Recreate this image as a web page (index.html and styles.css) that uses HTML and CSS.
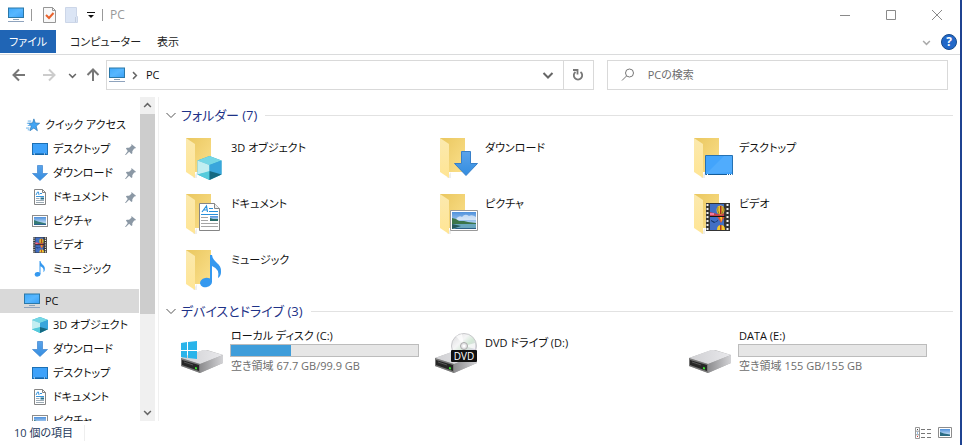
FILE: index.html
```html
<!DOCTYPE html>
<html lang="ja">
<head>
<meta charset="utf-8">
<title>PC</title>
<link rel="stylesheet" href="styles.css">
</head>
<body>
<svg class="defs" width="0" height="0" aria-hidden="true">
  <defs>
    <linearGradient id="g-screen" x1="0" y1="0" x2="1" y2="1"><stop offset="0" stop-color="#3fa9fb"/><stop offset=".5" stop-color="#57b7ff"/><stop offset="1" stop-color="#3a9ff5"/></linearGradient>
    <linearGradient id="g-back" x1="0" y1="0" x2="1" y2="1"><stop offset="0" stop-color="#eac75f"/><stop offset="1" stop-color="#fbe08c"/></linearGradient>
    <linearGradient id="g-flap" x1="0" y1="0" x2="0" y2="1"><stop offset="0" stop-color="#fbe9ae"/><stop offset="1" stop-color="#ffe594"/></linearGradient>
    <linearGradient id="g-arrow" x1="0" y1="0" x2="0" y2="1"><stop offset="0" stop-color="#5aa3ea"/><stop offset="1" stop-color="#338de0"/></linearGradient>
    <linearGradient id="g-side" x1="0" y1="0" x2="1" y2="0"><stop offset="0" stop-color="#8c8c8e"/><stop offset="1" stop-color="#d3d3d6"/></linearGradient>
    <linearGradient id="g-top" x1="0" y1="0" x2="1" y2="0"><stop offset="0" stop-color="#cfcfd2"/><stop offset="1" stop-color="#e9e9ec"/></linearGradient>
    <linearGradient id="g-sky" x1="0" y1="0" x2="0" y2="1"><stop offset="0" stop-color="#4f91dc"/><stop offset="1" stop-color="#e4f3fb"/></linearGradient>
    <linearGradient id="g-disc" x1="0" y1="0" x2="1" y2="1"><stop offset="0" stop-color="#d8d8da"/><stop offset=".35" stop-color="#f5f5f6"/><stop offset=".55" stop-color="#d3e8d6"/><stop offset=".8" stop-color="#dcd5e6"/><stop offset="1" stop-color="#c5c5c9"/></linearGradient>

    <symbol id="i-pc" viewBox="0 0 16 16">
      <rect x=".5" y="1" width="15" height="9.5" fill="url(#g-screen)" stroke="#2b78a8"/>
      <path d="M5 12.5h6" stroke="#8ba3b8"/><path d="M0 14.5h16" stroke="#8fa3bd"/>
    </symbol>
    <symbol id="i-desktop" viewBox="0 0 16 16">
      <rect x=".5" y="2.5" width="15" height="11" fill="#3ea2fa" stroke="#1c70b4"/><path d="M2 13h12" stroke="#0d5a9b"/><path d="M2 13h1m9 0h1" stroke="#fff"/>
    </symbol>
    <symbol id="i-down" viewBox="0 0 16 16"><path d="M5.5.5h5v8h5L8 15.5.5 8.500h5z" fill="url(#g-arrow)" stroke="#3e84cf" stroke-width=".7"/></symbol>
    <symbol id="i-doc" viewBox="0 0 16 16">
      <path d="M2.500.500h8l3 3v12h-11z" fill="#fff" stroke="#858585"/><path d="M10.500.500v3h3" fill="none" stroke="#858585"/>
      <path d="M4 6l1.500-3h1L7 6M8 4.500h2M4 7.500h8" fill="none" stroke="#3694dc"/><path d="M4 9.500h3.500M4 11.500h8M4 13.500h8" stroke="#9baab5"/><path d="M8.500 9.500H12" stroke="#26718e" stroke-width="2"/>
    </symbol>
    <symbol id="i-picture" viewBox="0 0 16 16">
      <rect x=".5" y="2.500" width="15" height="11" fill="#fff" stroke="#8c8c8c"/><path fill="url(#g-sky)" d="M2 4h12v8H2z"/><path d="M2 7l4 1.500 8 2V12H2z" fill="#367b76"/><path d="M2 11h12v1H2z" fill="#2b6390"/>
    </symbol>
    <symbol id="i-film" viewBox="0 0 24 28">
      <path fill="#343434" d="M0 0h24v28H0z"/><path fill="#426fc4" d="M4 1h14v12H4zM4 14h14v13H4z"/>
      <path d="M4 9l4 1 3 1 7-1v3H4z" fill="#c4434c"/><path d="M4 10h4v2H4z" fill="#ee79a1"/>
      <ellipse cx="14.500" cy="7" rx="4" ry="4.500" fill="#f5c22a"/><path d="M14 3h1.500v8H14z" fill="#a53123"/><path d="M12 4q-1 3 1 7M17 4q1 3-1 7" stroke="#5b672f" stroke-width=".7" fill="none"/>
      <path d="M11.500 14h7l-3.500 6z" fill="#e2562d"/><path d="M14 14h2l-.5 5z" fill="#fbd62d"/><path d="M5 17l4 2 3-2v1l-4 2-3-2z" fill="#173569"/>
      <path d="M11 27q0-5 4-5t4 5z" fill="#f6ca2f"/><path d="M14 22h1.500v5H14z" fill="#b53e23"/><path d="M4 13.500h15" stroke="#151515"/>
      <path d="M1.500 1v27M21.500 1v27" stroke="#f4f4f4" stroke-width="2" stroke-dasharray="2 2"/>
    </symbol>
    <symbol id="i-note" viewBox="0 0 22 33">
      <ellipse cx="6" cy="27.500" rx="6" ry="4.700" fill="#3498ef" transform="rotate(-12 6 27.500)"/><path d="M10 0h2c1 8 10 8 9 17q0 4-3 6 2-9-6-12v16h-2z" fill="#3498ef"/>
    </symbol>
    <symbol id="i-cube" viewBox="0 0 24 24">
      <path d="M12 0l12 4.500v14L12 24 0 18.500v-14z" fill="#35adcc"/><path d="M12 0l12 4.500L12 9 0 4.500z" fill="#75d7e5"/><path d="M0 4.500L12 9v7L0 18.500z" fill="#c2eef1"/><path d="M12 9l12-4.500v14L12 16z" fill="#39a6dc"/><path d="M0 18.500L12 15v9z" fill="#55cbdc"/><path d="M12 15l12 3.500L12 24z" fill="#156982"/>
    </symbol>
    <symbol id="i-star" viewBox="0 0 16 16">
      <path d="M9 1l1.600 4.700 5 .3-4 3.200 1.400 5.300L9 11.500l-4.500 3L6 9.200 3 6l4.500-.3z" fill="#42a5f4" stroke="#2777b8" stroke-width=".8"/><path d="M2 3.500h4M1 6h3M2 8.500h3M0 11.500h4M2 13.500h2" stroke="#53a7e8"/>
    </symbol>
    <symbol id="i-pin" viewBox="0 0 12 12"><path d="M7 0l5 4-1 1-1 0-2 3 0 2-1 1-2.500-2.500L1 12H0l3-4.500L1 5l1-1h2.500L7 2z" fill="#8b98a5"/></symbol>
    <symbol id="i-chev" viewBox="0 0 12 12"><path d="M1.500 4L6 8.500 10.500 4" fill="none" stroke="currentColor" stroke-width="var(--sw,1)"/></symbol>
    <symbol id="i-arrow" viewBox="0 0 14 14"><path d="M1.500 7H13M7 1.500L1.500 7 7 12.500" fill="none" stroke="currentColor" stroke-width="2"/></symbol>
    <symbol id="folder" viewBox="0 0 48 48">
      <path d="M6 2h25v34H6z" fill="url(#g-back)"/><path d="M13 42l4-6v6z" fill="#ddd" opacity=".5"/><path d="M6 2l9 6v34l-9-6z" fill="url(#g-flap)"/>
    </symbol>
    <symbol id="drive" viewBox="0 0 44 44">
      <path d="M1 26l23-8q1 0 3 0l16 5v8L20 41 1 34z" fill="#aaa"/><path d="M1 26l22-8h3l17 5-23 9z" fill="url(#g-top)"/><path d="M20 32l23-9v8L20 41z" fill="url(#g-side)"/><path d="M1 26l19 6v9L1 34z" fill="#777"/><path d="M2 28l17 5v6L2 33z" fill="#262626"/><path d="M4 30l9 3" stroke="#555"/><path d="M15 35l2 .5v2l-2-.5z" fill="#38e02c"/>
    </symbol>
  </defs>
</svg>

<div class="window">
  <header class="titlebar">
    <svg class="i16"><use href="#i-pc"/></svg>
    <span class="sep"></span>
    <button class="quick" aria-label="プロパティ"><svg width="14" height="16" viewBox="0 0 14 16"><path d="M.5.500h9l3 3v12H.5z" fill="#f8f8f8" stroke="#969696"/><path d="M9.500.500v3h3" fill="none" stroke="#969696"/><path d="M3 8l3 3 4.500-5" fill="none" stroke="#e8622d" stroke-width="2"/></svg></button>
    <button class="quick" aria-label="新しいフォルダー"><svg width="14" height="16" viewBox="0 0 14 16"><path d="M.5.500h11v9h1v6H.5z" fill="#dbe5f5" stroke="#ccd6e8"/><path d="M10.500 10v5" stroke="#c4cedf"/></svg></button>
    <button class="quick" aria-label="カスタマイズ"><svg width="8" height="8" viewBox="0 0 8 8"><path d="M0 1.500h8" stroke="#111"/><path d="M1 4h6L4 7z" fill="#111"/></svg></button>
    <span class="sep"></span>
    <h1>PC</h1>
    <div class="controls">
      <button aria-label="最小化"><svg width="12" height="12"><path d="M1 6.500h10" stroke="#8a8a8a"/></svg></button>
      <button aria-label="最大化"><svg width="12" height="12"><path d="M1.500 1.500h9v9h-9z" fill="none" stroke="#8a8a8a"/></svg></button>
      <button aria-label="閉じる"><svg width="12" height="12"><path d="M1 1l10 10M11 1L1 11" stroke="#8a8a8a"/></svg></button>
    </div>
  </header>

  <nav class="ribbon">
    <button class="tab file">ファイル</button>
    <button class="tab">コンピューター</button>
    <button class="tab">表示</button>
    <div class="ribbon-end">
      <button aria-label="リボンの展開"><svg class="i9 soft"><use href="#i-chev"/></svg></button>
      <button class="help" aria-label="ヘルプ">?</button>
    </div>
  </nav>

  <div class="toolbar">
    <div class="history">
      <button aria-label="戻る"><svg class="i14"><use href="#i-arrow"/></svg></button>
      <button class="off" aria-label="進む" disabled><svg class="i14 flip"><use href="#i-arrow"/></svg></button>
      <button class="recent" aria-label="最近表示した場所"><svg class="i9 bold"><use href="#i-chev"/></svg></button>
      <button class="up" aria-label="上へ"><svg class="i14 rise"><use href="#i-arrow"/></svg></button>
    </div>
    <div class="address">
      <svg class="i18"><use href="#i-pc"/></svg>
      <svg class="i9 bold left"><use href="#i-chev"/></svg>
      <a href="#pc">PC</a>
      <button class="drop" aria-label="以前の場所"><svg class="i12 bold"><use href="#i-chev"/></svg></button>
      <button class="reload" aria-label="最新の情報に更新"><svg width="12" height="14" viewBox="0 0 12 14"><path d="M8.500 4A4.200 4.200 0 1 1 3.500 4" fill="none" stroke="#777" stroke-width="1.800"/><path d="M1 2h4.500v4.500" fill="none" stroke="#777" stroke-width="1.800"/></svg></button>
    </div>
    <label class="search">
      <svg width="14" height="14" viewBox="0 0 14 14"><circle cx="8.500" cy="5" r="4" fill="none" stroke="#777"/><path d="M5.500 8L1 12.500" stroke="#777"/></svg>
      <input type="search" placeholder="PCの検索" aria-label="PCの検索">
    </label>
  </div>

  <div class="body">
    <aside class="side">
      <ul class="tree">
        <li class="root"><svg class="i16 star"><use href="#i-star"/></svg><a href="#q">クイック アクセス</a></li>
        <li><svg class="i16"><use href="#i-desktop"/></svg><a href="#q1">デスクトップ</a><svg class="pin"><use href="#i-pin"/></svg></li>
        <li><svg class="i16"><use href="#i-down"/></svg><a href="#q2">ダウンロード</a><svg class="pin"><use href="#i-pin"/></svg></li>
        <li><svg class="i16"><use href="#i-doc"/></svg><a href="#q3">ドキュメント</a><svg class="pin"><use href="#i-pin"/></svg></li>
        <li><svg class="i16"><use href="#i-picture"/></svg><a href="#q4">ピクチャ</a><svg class="pin"><use href="#i-pin"/></svg></li>
        <li><svg class="i16"><use href="#i-film"/></svg><a href="#q5">ビデオ</a></li>
        <li><svg class="i16"><use href="#i-note"/></svg><a href="#q6">ミュージック</a></li>
        <li class="root current"><svg class="i16"><use href="#i-pc"/></svg><a href="#pc">PC</a></li>
        <li><svg class="i16"><use href="#i-cube"/></svg><a href="#p1">3D オブジェクト</a></li>
        <li><svg class="i16"><use href="#i-down"/></svg><a href="#p2">ダウンロード</a></li>
        <li><svg class="i16"><use href="#i-desktop"/></svg><a href="#p3">デスクトップ</a></li>
        <li><svg class="i16"><use href="#i-doc"/></svg><a href="#p4">ドキュメント</a></li>
        <li><svg class="i16"><use href="#i-picture"/></svg><a href="#p5">ピクチャ</a></li>
      </ul>
      <div class="scroll">
        <button aria-label="上へスクロール"><svg class="i9 bold turn"><use href="#i-chev"/></svg></button>
        <div class="track"><div class="thumb"></div></div>
        <button aria-label="下へスクロール"><svg class="i9 bold"><use href="#i-chev"/></svg></button>
      </div>
    </aside>

    <main class="content">
      <section>
        <h2><svg class="i12"><use href="#i-chev"/></svg><span>フォルダー (7)</span></h2>
        <div class="grid">
          <a class="item" href="#f1"><svg class="big"><use href="#folder"/><use href="#i-cube" x="17" y="20" width="25" height="24"/></svg><span>3D オブジェクト</span></a>
          <a class="item" href="#f2"><svg class="big"><use href="#folder"/><path d="M27.500 15.500h9v12h7L32 39.500 20.500 27.500h7z" fill="url(#g-arrow)" stroke="#377fc9"/></svg><span>ダウンロード</span></a>
          <a class="item" href="#f3"><svg class="big"><use href="#folder"/><path d="M17.500 19.500h27v19h-27z" fill="#42a4fc" stroke="#2571b3"/><path d="M18 38L36 20h8v16z" fill="#66baff" opacity=".4"/><path d="M18 38.500h26" stroke="#145c98"/><path d="M19 38.500h1m19 0h1m1 0h1m1 0h1" stroke="#fff"/></svg><span>デスクトップ</span></a>
          <a class="item" href="#f4"><svg class="big"><use href="#folder"/><path d="M19.500 11.500h15l5 5v22h-20z" fill="#fff" stroke="#858585"/><path d="M34.500 11.500v5h5" fill="#eee" stroke="#858585"/><path d="M22 20l4.500-6 1 6m-4-2h3M29 16.500h4M29 19.500h9M21 22.500h17" fill="none" stroke="#2890dc" stroke-width="1.200"/><path d="M21 25.500h7m-7 3h7m-7 3h17m-17 3h17" stroke="#a6a6a6"/><path d="M30 24h8v5h-8z" fill="url(#g-sky)"/><path d="M30 26l3 1h5v2h-8z" fill="#286c68"/></svg><span>ドキュメント</span></a>
          <a class="item" href="#f5"><svg class="big"><use href="#folder"/><path d="M16.500 18.500h27v20h-27z" fill="#fff" stroke="#999"/><path d="M18 20h24v17H18z" fill="url(#g-sky)"/><path d="M22 27q3-4 6-2 3-4 7-1 3-2 7 1v3H22z" fill="#fff" opacity=".6"/><path d="M18 26l4 1 3 2 5 0 4 1 8 1v1H18z" fill="#3b754a"/><path d="M18 32h24v5H18z" fill="#69a7bd"/><path d="M18 32l9 2-9 3z" fill="#25595c"/><path d="M22 36h20v1H20z" fill="#2b5e85"/></svg><span>ピクチャ</span></a>
          <a class="item" href="#f6"><svg class="big"><use href="#folder"/><use href="#i-film" x="18" y="11" width="24" height="28"/></svg><span>ビデオ</span></a>
          <a class="item" href="#f7"><svg class="big"><use href="#folder"/><use href="#i-note" x="20" y="7" width="22" height="33"/></svg><span>ミュージック</span></a>
        </div>
      </section>

      <section>
        <h2><svg class="i12"><use href="#i-chev"/></svg><span>デバイスとドライブ (3)</span></h2>
        <div class="grid drives">
          <a class="item" href="#c"><svg class="disk"><use href="#drive"/><path d="M1 11l6-1v8H1zM8 10l9-1v9H8zM1 19h6v7l-6-1zM8 19h9v8l-9-1z" fill="#29b4ea"/></svg>
            <div class="info"><span id="n-c">ローカル ディスク (C:)</span><progress value="32" max="100" aria-labelledby="n-c"></progress><small>空き領域 67.7 GB/99.9 GB</small></div></a>
          <a class="item" href="#d"><svg class="disk"><use href="#drive"/><circle cx="30" cy="14" r="12.500" fill="url(#g-disc)" stroke="#c8c8cb"/><path d="M30 14L22 4l6-2zM30 14l11-3v6z" fill="#fff" opacity=".7"/><circle cx="30" cy="14" r="3.500" fill="#e6e6e8" stroke="#aaa"/><circle cx="30" cy="14" r="1.500" fill="#fff"/><rect x="17" y="18" width="26" height="12" rx="1" fill="#111"/><text x="30" y="28" text-anchor="middle" class="dvd">DVD</text></svg>
            <div class="info solo"><span>DVD ドライブ (D:)</span></div></a>
          <a class="item" href="#e"><svg class="disk"><use href="#drive"/></svg>
            <div class="info"><span id="n-e">DATA (E:)</span><progress value="0" max="100" aria-labelledby="n-e"></progress><small>空き領域 155 GB/155 GB</small></div></a>
        </div>
      </section>
    </main>
  </div>

  <footer class="status">
    <span class="count">10 個の項目</span>
    <div class="views">
      <button aria-label="詳細"><svg width="16" height="12" viewBox="0 0 16 12"><path d="M.5.500h4v11h-4zM.5 4.200h4M.5 7.800h4" fill="#fff" stroke="#999"/><path d="M2 2.500h1" stroke="#444"/><path d="M2 6h1" stroke="#2d83d6"/><path d="M2 9.500h1" stroke="#c33"/><path d="M6 2.500h4m2 0h4M6 6.500h4m2 0h4M6 10.500h4m2 0h4" stroke="#777"/></svg></button>
      <button aria-label="大アイコン"><svg width="14" height="16" viewBox="1 0 14 16"><path d="M1.500 2.500h13v10h-13z" fill="#fff" stroke="#8c8c8c"/><path fill="url(#g-sky)" d="M3 4h10v7H3z"/><path d="M3 7l4 1.500 6 1V11H3z" fill="#2b6c83"/></svg></button>
    </div>
  </footer>
</div>
</body>
</html>
```

FILE: styles.css
```css
* { box-sizing: border-box; }

body {
  margin: 0;
  background: #fff;
  color: #111;
  font: 11px/16px "Open Sans", "Noto Sans CJK JP", sans-serif;
  font-feature-settings: "palt";
}

button {
  display: flex;
  align-items: center;
  justify-content: center;
  margin: 0;
  padding: 0;
  border: 0;
  background: none;
  color: #777;
  font: inherit;
  font-feature-settings: inherit;
}

a { color: inherit; text-decoration: none; }
svg { flex: none; display: block; }
.defs { position: absolute; }

.i9 { width: 9px; height: 9px; }
.i12 { width: 12px; height: 12px; }
.i14 { width: 14px; height: 14px; }
.i16 { width: 16px; height: 16px; }
.i18 { width: 16px; height: 18px; }
.bold { --sw: 2; color: #666; }
.soft { --sw: 2; color: #aaa; }
.flip, .turn { transform: rotate(180deg); }
.rise { transform: rotate(90deg); }
.left { transform: rotate(-90deg); }

.window {
  display: flex;
  flex-direction: column;
  height: 100vh;
  overflow: hidden;
  border-right: 2px solid #1f4391;
}

.titlebar {
  display: flex;
  align-items: center;
  height: 30px;
  padding-left: 8px;
}
.sep { width: 1px; height: 12px; margin: 0 11px 0 7px; background: #999; }
.quick { margin-right: 8px; }
.quick + .quick + .quick { margin-right: 7px; }
.quick + .sep { margin: 0 7px 0 0; }
.titlebar h1 { margin: 0; color: #999; font-size: 12px; font-weight: 400; }
.controls { display: flex; align-self: stretch; margin-left: auto; }
.controls button { width: 46px; }

.ribbon {
  display: flex;
  height: 25px;
  border-bottom: 1px solid #dadbdc;
}
.tab { height: 23px; padding: 0 8px; color: #222; }
.tab.file { width: 56px; margin-right: 6px; padding: 0; background: #2065b5; color: #fff; }
.ribbon-end { display: flex; align-items: center; gap: 10px; margin-left: auto; padding-right: 3px; }
.help {
  width: 16px;
  height: 16px;
  border: 1px solid #174b8c;
  border-radius: 50%;
  background: #2268c8;
  color: #fff;
  font-size: 12px;
  font-weight: 700;
}

.toolbar {
  display: grid;
  grid-template-columns: 93px 10fr 7fr;
  gap: 13px;
  padding: 5px 12px 7px 0;
}
.history { display: flex; align-items: center; padding-left: 12px; }
.off { margin-left: 16px; color: #ccc; }
.recent { margin-left: 12px; }
.up { margin-left: 9px; }
.address, .search { display: flex; align-items: center; height: 30px; border: 1px solid #d9d9d9; }
.address { padding-left: 2px; }
.address .left { margin: 0 7px 0 5px; }
.drop { width: 30px; height: 100%; margin-left: auto; }
.reload { width: 30px; height: 100%; border-left: 1px solid #d9d9d9; }
.search { padding: 0 13px; gap: 13px; }
.search input {
  flex: 1;
  min-width: 0;
  padding: 0;
  border: 0;
  outline: 0;
  font: inherit;
  font-feature-settings: inherit;
}
.search input::placeholder { color: #6d6d6d; }

.body { display: flex; flex: 1; min-height: 0; }
.side { display: flex; width: 159px; padding-right: 3px; border-right: 1px solid #f0f0f0; }
.tree { flex: 1; min-width: 0; margin: 0; padding: 16px 0 0; overflow: hidden; list-style: none; }
.tree li {
  display: flex;
  align-items: center;
  gap: 5px;
  height: 24px;
  padding: 0 3px 0 32px;
  white-space: nowrap;
}
.tree .root { padding-left: 24px; }
.tree .current { margin-top: 8px; background: #d9d9d9; }
.star { padding: 1px 0 1px 2px; }
.pin { width: 11px; height: 11px; margin-left: auto; }
.scroll { display: flex; flex-direction: column; width: 16px; border-left: 1px solid #fff; background: #f0f0f0; }
.scroll button { height: 17px; }
.track { flex: 1; }
.thumb { height: 69%; background: #cdcdcd; }

.content { flex: 1; min-width: 0; padding: 8px 7px 0 6px; overflow: hidden; }
section + section { margin-top: 5px; }
h2 {
  display: flex;
  align-items: center;
  gap: 4px;
  height: 20px;
  margin: 0;
  color: #1e3287;
  font-size: 13px;
  font-weight: 400;
}
h2 svg { color: #555; }
h2::after { content: ""; flex: 1; height: 1px; margin-left: 4px; background: #e2e2e2; }
.grid { display: grid; grid-template-columns: repeat(auto-fill, 254px); row-gap: 8px; padding: 11px 0 0 15px; }
.item { display: flex; gap: 3px; height: 48px; }
.item > span { padding-top: 4px; }
.big { width: 48px; height: 48px; }
.drives { padding-top: 7px; }
.drives .item { gap: 6px; }
.disk { width: 44px; height: 44px; margin-top: 4px; overflow: visible; }
.dvd { fill: #fff; font-size: 10px; font-weight: 400; }
.info { display: flex; flex-direction: column; width: 189px; }
.info span, .info small { padding-left: 1px; }
.solo { padding-top: 7px; }
.info small { margin-top: 1px; color: #6d6d6d; font-size: 11px; }
progress {
  width: 100%;
  height: 13px;
  border: 1px solid #bcbcbc;
  background: #e6e6e6;
  appearance: none;
}
progress::-webkit-progress-bar { background: #e6e6e6; }
progress::-webkit-progress-value { background: #3f9dda; }

.status { display: flex; align-items: center; height: 24px; padding: 0 8px 0 14px; color: #1e395b; }
.count { padding-right: 11px; border-right: 1px solid #eee; }
.views { display: flex; gap: 7px; margin-left: auto; }
```
